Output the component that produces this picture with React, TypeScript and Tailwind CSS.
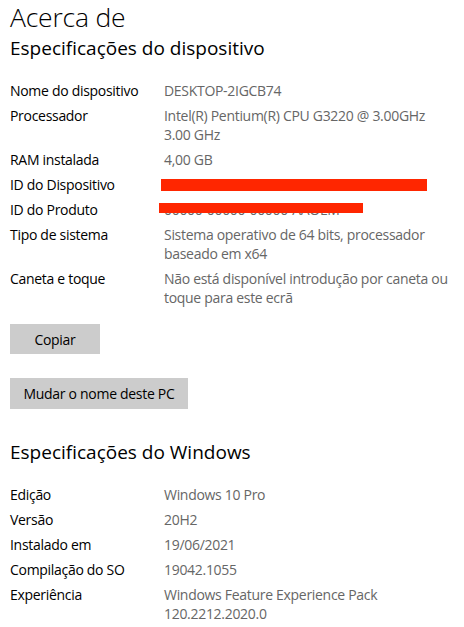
const deviceRows: { label: string; value: string[]; redact?: string }[] = [
  { label: 'Nome do dispositivo', value: ['DESKTOP-2IGCB74'] },
  { label: 'Processador', value: ['Intel(R) Pentium(R) CPU G3220 @ 3.00GHz', '3.00 GHz'] },
  { label: 'RAM instalada', value: ['4,00 GB'] },
  { label: 'ID do Dispositivo', value: ['00000000-0000-0000-0000-0000000'], redact: 'w-[266px] h-[12px] top-[4px] left-[-3px]' },
  { label: 'ID do Produto', value: ['00000-00000-00000-AAOEM'], redact: 'w-[204px] h-[10px] top-[3px] left-[-5px]' },
  { label: 'Tipo de sistema', value: ['Sistema operativo de 64 bits, processador', 'baseado em x64'] },
  { label: 'Caneta e toque', value: ['Não está disponível introdução por caneta ou', 'toque para este ecrã'] },
];

const windowsRows: { label: string; value: string[] }[] = [
  { label: 'Edição', value: ['Windows 10 Pro'] },
  { label: 'Versão', value: ['20H2'] },
  { label: 'Instalado em', value: ['19/06/2021'] },
  { label: 'Compilação do SO', value: ['19042.1055'] },
  { label: 'Experiência', value: ['Windows Feature Experience Pack', '120.2212.2020.0'] },
];

const Row = ({ label, value, redact }: { label: string; value: string[]; redact?: string }) => (
  <div className="flex text-[14px] leading-[19px] tracking-[-0.3px]">
    <div className="w-[154px] shrink-0 text-black">{label}</div>
    <div className="relative text-[#666666]">
      {value.map((line) => (
        <div key={line} className="whitespace-nowrap">
          {line}
        </div>
      ))}
      {redact && <div className={`absolute bg-[#ff2600] ${redact}`} />}
    </div>
  </div>
);

export default function App() {
  return (
    <div
      className="w-[464px] h-[627px] overflow-hidden bg-white pl-[10px] text-black"
      style={{ fontFamily: '"Open Sans", "Noto Sans", sans-serif' }}
    >
      <h1 className="text-[26.5px] leading-[34px] font-light tracking-[-0.2px]">Acerca de</h1>
      <h2 className="text-[19px] leading-[26px] mt-[1px]">Especificações do dispositivo</h2>

      <div className="flex flex-col gap-[6px] mt-[20px]">
        {deviceRows.map((r) => (
          <Row key={r.label} {...r} />
        ))}
      </div>

      <button className="block mt-[17px] w-[90px] h-[30px] bg-[#cccccc] text-[14px] tracking-[-0.3px]">Copiar</button>
      <button className="block mt-[24px] w-[178px] h-[31px] bg-[#cccccc] text-[14px] tracking-[-0.3px]">
        Mudar o nome deste PC
      </button>

      <h2 className="text-[19px] leading-[26px] mt-[30px]">Especificações do Windows</h2>

      <div className="flex flex-col gap-[6px] mt-[20px]">
        {windowsRows.map((r) => (
          <Row key={r.label} {...r} />
        ))}
      </div>
    </div>
  );
}
